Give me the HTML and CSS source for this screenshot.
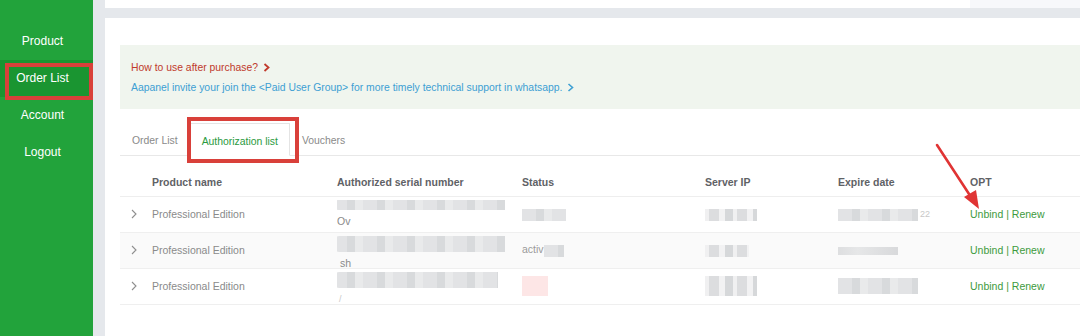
FILE: index.html
```html
<!DOCTYPE html>
<html lang="en">
<head>
    <meta charset="UTF-8">
    <meta name="viewport" content="width=device-width, initial-scale=1.0">
    <title>Authorization list</title>
    <link rel="stylesheet" href="styles.css">
</head>
<body>
    <div class="layout">
        <div class="sidebar">
            <div class="nav-item">Product</div>
            <div class="nav-item active">Order List</div>
            <div class="nav-item">Account</div>
            <div class="nav-item">Logout</div>
        </div>

        <div class="main">
            <div class="top-card">
                <div class="top-left"></div>
                <div class="top-right"></div>
            </div>

            <div class="card">
                <div class="notice">
                    <div class="how">How to use after purchase?
                        <svg class="chev" width="7" height="9" viewBox="0 0 7 9"><polyline points="1.5,1 5.5,4.5 1.5,8" fill="none" stroke="#c0392b" stroke-width="1.8"/></svg>
                    </div>
                    <div class="group">Aapanel invite your join the &lt;Paid User Group&gt; for more timely technical support in whatsapp.
                        <svg class="chev" width="7" height="9" viewBox="0 0 7 9"><polyline points="1.5,1 5.5,4.5 1.5,8" fill="none" stroke="#3d9fd3" stroke-width="1.6"/></svg>
                    </div>
                </div>

                <div class="tabs">
                    <div class="tab">Order List</div>
                    <div class="tab active">Authorization list</div>
                    <div class="tab">Vouchers</div>
                </div>

                <table class="auth-table">
                    <thead>
                        <tr>
                            <th class="col-expand"></th>
                            <th class="col-product">Product name</th>
                            <th class="col-serial">Authorized serial number</th>
                            <th class="col-status">Status</th>
                            <th class="col-ip">Server IP</th>
                            <th class="col-expire">Expire date</th>
                            <th class="col-opt">OPT</th>
                        </tr>
                    </thead>
                    <tbody>
                        <tr>
                            <td class="expand"><svg width="6" height="10" viewBox="0 0 6 10"><polyline points="1,1 5,5 1,9" fill="none" stroke="#8f8f8f" stroke-width="1.1"/></svg></td>
                            <td>Professional Edition</td>
                            <td>
                                <div class="serial">
                                    <div class="smear bar w172 h10"></div>
                                    <div class="serial-text">Ov</div>
                                </div>
                            </td>
                            <td><span class="smear w44 h12"></span></td>
                            <td><span class="smear dots w52 h12"></span></td>
                            <td><span class="smear w80 h12"></span><span class="faint">22</span></td>
                            <td class="opt">Unbind | Renew</td>
                        </tr>
                        <tr class="alt">
                            <td class="expand"><svg width="6" height="10" viewBox="0 0 6 10"><polyline points="1,1 5,5 1,9" fill="none" stroke="#8f8f8f" stroke-width="1.1"/></svg></td>
                            <td>Professional Edition</td>
                            <td>
                                <div class="serial">
                                    <div class="smear bar w172 h16"></div>
                                    <div class="serial-text">&nbsp;sh</div>
                                </div>
                            </td>
                            <td><span class="status-text">activ</span><span class="smear w20 h12"></span></td>
                            <td><span class="smear dots w44 h12"></span></td>
                            <td><span class="smear shift w100 h8"></span></td>
                            <td class="opt">Unbind | Renew</td>
                        </tr>
                        <tr>
                            <td class="expand"><svg width="6" height="10" viewBox="0 0 6 10"><polyline points="1,1 5,5 1,9" fill="none" stroke="#8f8f8f" stroke-width="1.1"/></svg></td>
                            <td>Professional Edition</td>
                            <td>
                                <div class="serial">
                                    <div class="smear bar w165 h16"></div>
                                    <div class="serial-text faint">/</div>
                                </div>
                            </td>
                            <td><span class="smear pink w26 h20"></span></td>
                            <td><span class="smear dots w52 h20"></span></td>
                            <td><span class="smear w80 h16"></span></td>
                            <td class="opt">Unbind | Renew</td>
                        </tr>
                    </tbody>
                </table>
            </div>
        </div>
    </div>

    <div class="mark mark-nav"></div>
    <div class="mark mark-tab"></div>
    <svg class="arrow" width="60" height="76" viewBox="0 0 60 76">
        <line x1="6" y1="4" x2="40" y2="56" stroke="#e03434" stroke-width="2.6" stroke-linecap="round"/>
        <polygon points="48,68 33,56 45,49" fill="#e03434"/>
    </svg>
</body>
</html>
```

FILE: styles.css
```css
body {
    margin: 0;
    font-family: "Liberation Sans", Arial, sans-serif;
    background-color: #e5e8ec;
    width: 1080px;
    height: 336px;
    overflow: hidden;
    position: relative;
}

.layout {
    display: flex;
    height: 336px;
}

/* sidebar */
.sidebar {
    width: 93px;
    flex-shrink: 0;
    background-color: #22a33b;
    padding-top: 23px;
    box-sizing: border-box;
}

.nav-item {
    height: 37px;
    line-height: 37px;
    color: #fff;
    font-size: 12px;
    text-align: center;
    padding-right: 8px;
}

.nav-item.active {
    background-color: #1a9531;
}

/* main area */
.main {
    flex: 1;
    padding-left: 12px;
    display: flex;
    flex-direction: column;
    min-width: 0;
}

.top-card {
    display: flex;
    height: 8px;
    margin-bottom: 10px;
}

.top-left {
    flex: 1;
    background-color: #fff;
}

.top-right {
    width: 110px;
    background-color: #f7f8fb;
}

.card {
    flex: 1;
    background-color: #fff;
    padding: 27px 0 0 15px;
}

.notice {
    height: 64px;
    box-sizing: border-box;
    background-color: #f0f5ee;
    padding: 13px 11px;
    font-size: 10.4px;
    line-height: 20px;
}

.how {
    color: #c0392b;
}

.group {
    color: #3d9fd3;
}

.chev {
    margin-left: 2px;
    vertical-align: -1px;
}

/* tabs */
.tabs {
    display: flex;
    margin-top: 14px;
    border-bottom: 1px solid #e8e8e8;
    height: 32px;
}

.tab {
    padding: 0 12px;
    line-height: 36px;
    font-size: 10.4px;
    color: #8a8a8a;
}

.tab.active {
    color: #2a9a3e;
    background-color: #fff;
    border: 1px solid #e4e4e4;
    border-bottom-color: #fff;
    height: 33px;
    line-height: 35px;
    box-sizing: border-box;
    margin-bottom: -1px;
    padding: 0 11px;
}

/* table */
.auth-table {
    width: 960px;
    border-collapse: collapse;
    table-layout: fixed;
    font-size: 10.5px;
    color: #8a8a8a;
}

.auth-table th {
    text-align: left;
    font-weight: bold;
    color: #5f6266;
    height: 40px;
    padding: 12px 0 0 0;
    box-sizing: border-box;
    border-bottom: 1px solid #eeeeee;
}

.auth-table td {
    height: 36px;
    padding: 0;
    border-bottom: 1px solid #efefef;
    white-space: nowrap;
    overflow: hidden;
    box-sizing: border-box;
}

.auth-table tr.alt td {
    background-color: #fafafa;
}

.col-expand { width: 32px; }
.col-product { width: 185px; }
.col-serial { width: 185px; }
.col-status { width: 183px; }
.col-ip { width: 133px; }
.col-expire { width: 132px; }

.expand {
    padding-left: 11px !important;
    line-height: 0;
}

.serial {
    height: 35px;
    overflow: hidden;
    padding-top: 3px;
    box-sizing: border-box;
    line-height: 12px;
}

.serial-text {
    padding-top: 5px;
    color: #8a8a8a;
}

.status-text {
    color: #9a9a9a;
}

.opt {
    color: #3d9a3d;
}

.faint {
    color: #c8c8c8;
    font-size: 9px;
    margin-left: 2px;
}

/* blurred data */
.smear {
    display: inline-block;
    vertical-align: middle;
    background: repeating-linear-gradient(90deg, #e2e3e5 0 14px, #d8dadc 14px 22px, #e9eaeb 22px 30px);
    filter: blur(0.7px);
}

.smear.bar {
    display: block;
    margin-left: -4px;
    border-radius: 6px 0 0 6px;
}

.smear.dots {
    background: repeating-linear-gradient(90deg, #f0f0f1 0 4px, #dcdddf 4px 14px, #f2f2f3 14px 20px, #d6d8da 20px 28px);
}

.smear.shift {
    margin-left: -40px;
    background: linear-gradient(90deg, #f4f4f4, #d9dadc 30%, #e6e7e8 60%, #d8d9db);
}

.smear.pink {
    background: #fde6e6;
}

.w20 { width: 20px; }
.w26 { width: 26px; }
.w44 { width: 44px; }
.w52 { width: 52px; }
.w80 { width: 80px; }
.w100 { width: 100px; }
.w165 { width: 165px; }
.w172 { width: 172px; }
.h8 { height: 8px; }
.h10 { height: 10px; }
.h12 { height: 12px; }
.h16 { height: 16px; }
.h18 { height: 18px; }
.h20 { height: 20px; }

/* annotations */
.mark {
    position: absolute;
    border: 4px solid #d9403a;
    box-sizing: border-box;
}

.mark-nav {
    left: 5px;
    top: 63px;
    width: 88px;
    height: 37px;
}

.mark-tab {
    left: 187px;
    top: 117px;
    width: 112px;
    height: 46px;
}

.arrow {
    position: absolute;
    left: 931px;
    top: 141px;
}
```
